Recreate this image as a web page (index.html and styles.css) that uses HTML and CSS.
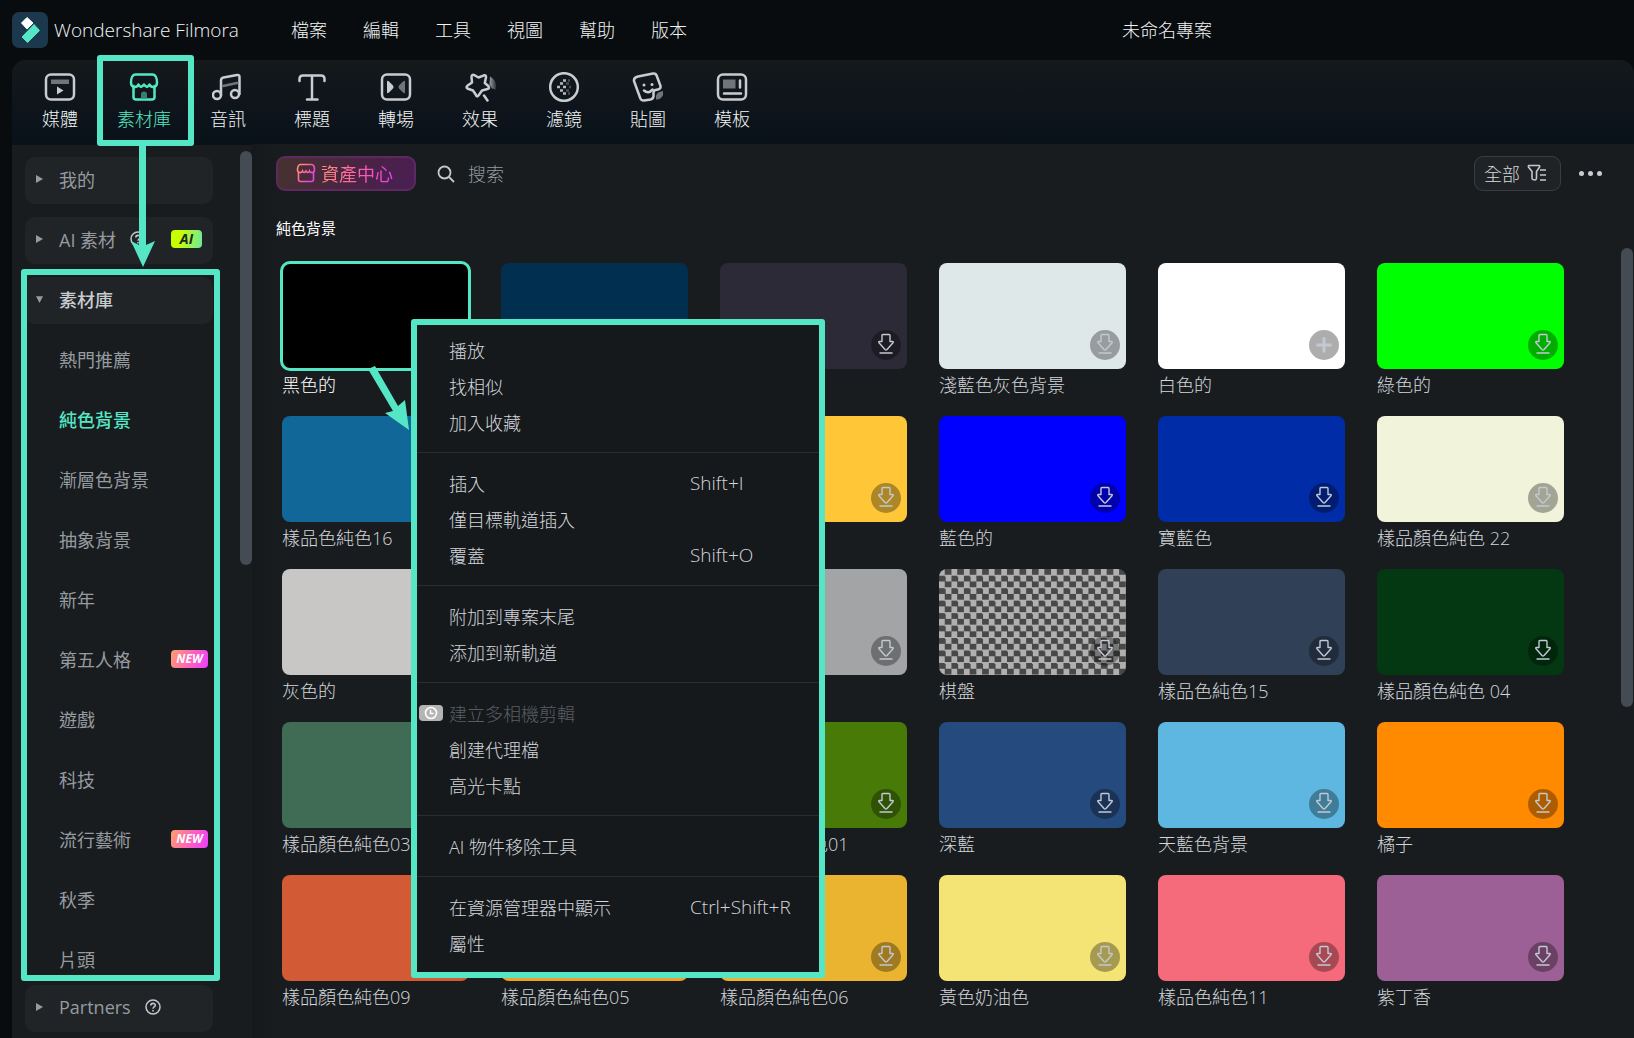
FILE: index.html
```html
<!DOCTYPE html>
<html lang="zh-Hant">
<head>
  <meta charset="UTF-8" />
  <meta name="viewport" content="width=device-width,initial-scale=1.0">
  <title>Wondershare Filmora</title>
  <link rel="stylesheet" href="styles.css">
</head>
<body>
  <!-- shared icons -->
  <svg class="defs" aria-hidden="true">
    <defs>
      <linearGradient id="pink" x1="0" y1="0" x2="1" y2="0.6">
        <stop offset="0" stop-color="#ff9f6b"/>
        <stop offset="0.5" stop-color="#ff62a5"/>
        <stop offset="1" stop-color="#e93ff0"/>
      </linearGradient>
      <linearGradient id="fade" x1="0" y1="0" x2="1" y2="0">
        <stop offset="0" stop-color="#9a9ea6"/>
        <stop offset="1" stop-color="#2a2f36"/>
      </linearGradient>
    </defs>
    <symbol id="i-down" viewBox="0 0 30 30">
      <path d="M11 5.5q0-1 1-1h6q1 0 1 1v6h2.5q1.300 0 .5 1.200L16 19.500q-1 1-2 0L8 12.700q-.8-1.200.5-1.200H11z" fill="none" stroke="#c3c9d2" stroke-width="1.400" stroke-linejoin="round"/>
      <path d="M8.500 23h13" stroke="#c3c9d2" stroke-width="1.400"/>
    </symbol>
    <symbol id="i-plus" viewBox="0 0 30 30">
      <path d="M15 7.500v15M7.500 15h15" stroke="#c3c9d2" stroke-width="3"/>
    </symbol>
    <symbol id="i-help" viewBox="0 0 16 16">
      <circle cx="8" cy="8" r="7" fill="none" stroke="currentColor" stroke-width="1.500"/>
      <path d="M5.800 6.600c0-3 4.500-2.900 4.500-.3C10.300 8 8 7.900 8 9.700M8 11v1.500" fill="none" stroke="currentColor" stroke-width="1.600"/>
    </symbol>
  </svg>

  <header class="titlebar">
    <svg class="logo" viewBox="0 0 36 36">
      <rect width="36" height="36" rx="7" fill="#1c384d"/>
      <path d="M15 5.500l6 5.500-6 6-5.500-6z" fill="#fff" stroke="#fff" stroke-linejoin="round"/>
      <path d="M22 12.500l5.500 6L15.500 30.500 10 25z" fill="#55e7c5" stroke="#55e7c5" stroke-linejoin="round"/>
    </svg>
    <span class="brand">Wondershare Filmora</span>
    <nav class="menubar">
      <button>檔案</button>
      <button>編輯</button>
      <button>工具</button>
      <button>視圖</button>
      <button>幫助</button>
      <button>版本</button>
    </nav>
    <span class="project">未命名專案</span>
  </header>

  <div class="app">
    <nav class="tabs">
      <button class="tab">
        <svg viewBox="0 0 32 30"><rect x="2" y="2.500" width="28" height="25" rx="5"/><path class="dim" d="M7 7.500h18v4.500H7z"/><path class="fill" d="M13 14.500l6.500 4-6.500 4z"/></svg>
        媒體
      </button>
      <button class="tab active">
        <svg viewBox="0 0 32 30"><path d="M7.500 2.500h17c3 0 4.500 4 4.500 8 0 5-5.500 6-7.500 2-1.500 4-4 2-5.500 0-1.500 2-4 4-5.500 0-2 4-7.500 3-7.500-2 0-4 1.500-8 4.500-8z"/><path d="M5.500 14v11q0 2.500 2.500 2.500h16q2.500 0 2.500-2.500V14"/><path class="dim" d="M13 26.500v-4q0-3 3-3t3 3v4z"/></svg>
        素材庫
      </button>
      <button class="tab">
        <svg viewBox="0 0 32 30"><circle cx="5" cy="23" r="4"/><circle cx="23" cy="22" r="4"/><path d="M9 23V8.500q0-2.500 2.500-3L25 3q2.500-.5 2.500 2v17"/><path class="soft" d="M11 14l14-3"/></svg>
        音訊
      </button>
      <button class="tab">
        <svg viewBox="0 0 32 30"><path d="M3.500 9V7q0-3.500 3.500-3.500h18q3.500 0 3.500 3.500v2M16 3.500V27M11 27.500h10.500"/></svg>
        標題
      </button>
      <button class="tab">
        <svg viewBox="0 0 32 30"><rect x="2" y="2.500" width="28" height="25" rx="5"/><path class="fill" d="M7 10v10q0 2 2 .6l4-4q1.200-1.600 0-3.200l-4-4q-2-1.400-2 .6z"/><path class="dim" d="M25 10v10q0 2-2 .6l-4-4q-1.200-1.600 0-3.200l4-4q2-1.400 2 .6z"/></svg>
        轉場
      </button>
      <button class="tab">
        <svg viewBox="0 0 32 30"><path d="M14.500 5.500L20 3.300Q22.300 3 22 5.300L20.800 11l3.500 3q1.700 2.300-.8 3L18 18.500l-3.500 5q-1.700 2-2.500-.5l-3-4.500-5-1.700q-2.500-1.300-.7-3L8 10.500 7.500 5Q7.800 2 10.300 3.200z"/><path d="M20 23.500l3.500 5"/><path fill="url(#fade)" stroke="none" d="M26 4.500c5 3 7 7 6 13l-4-1-2.500-4z"/></svg>
        效果
      </button>
      <button class="tab">
        <svg viewBox="0 0 32 30"><circle cx="16" cy="15" r="13.800"/><path class="dots" d="M9 15h3M12 11.500h3M12 18.500h3M15 8.500h3M15 15h3M15 21.500h3"/><path class="dots dark" d="M18 11.500h3M18 18.500h3M20 8.500h2M21 15h2M20 21.500h2"/></svg>
        濾鏡
      </button>
      <button class="tab">
        <svg viewBox="0 0 32 30"><path class="dim" d="M31 19v4c-1 3-4 5-7 4.500v-4l2-3z"/><path d="M6 4.500l15-3q3-.4 3.800 2.500L28.500 14q.5 3-2.500 3.500l-2.500.5q-2 .5-2 2.500v4q-.5 2.500-3 3l-6.500 1q-3 .2-3.800-2.500L2 9Q1.500 5.500 6 4.500z"/><circle class="fill" cx="12" cy="13" r="1.500"/><circle class="fill" cx="20" cy="12.500" r="1.500"/><path d="M12 18.500q4.500 4 8.500-1"/></svg>
        貼圖
      </button>
      <button class="tab">
        <svg viewBox="0 0 32 30"><rect x="2" y="2.500" width="28" height="25" rx="5"/><path class="dim" d="M7 7.500h12.500v9H7z"/><path d="M24 8.500v7M8 21.500h17"/></svg>
        模板
      </button>
    </nav>

    <div class="workspace">
      <aside class="sidebar">
        <div class="side-col">
          <div class="side-scroll">
            <button class="group"><i class="caret"></i>我的</button>
            <button class="group"><i class="caret"></i>AI 素材<svg class="help"><use href="#i-help"/></svg><span class="badge badge-ai">AI</span></button>
            <button class="group open"><i class="caret"></i>素材庫</button>
            <ul class="subs">
              <li><a href="#">熱門推薦</a></li>
              <li><a href="#" class="current">純色背景</a></li>
              <li><a href="#">漸層色背景</a></li>
              <li><a href="#">抽象背景</a></li>
              <li><a href="#">新年</a></li>
              <li><a href="#">第五人格<span class="badge badge-new">NEW</span></a></li>
              <li><a href="#">遊戲</a></li>
              <li><a href="#">科技</a></li>
              <li><a href="#">流行藝術<span class="badge badge-new">NEW</span></a></li>
              <li><a href="#">秋季</a></li>
              <li><a href="#">片頭</a></li>
            </ul>
          </div>
          <button class="group partners"><i class="caret"></i>Partners<svg class="help"><use href="#i-help"/></svg></button>
        </div>
        <div class="track side-track"><div class="thumb"></div></div>
      </aside>

      <main class="content">
        <div class="toolbar">
          <button class="center-btn">
            <svg viewBox="0 0 20 20"><path d="M4.500 1.500h11c2 0 3 3 3 5.500 0 3-4 3.500-5 1-1 2.500-2.500 1.500-3.500 0-1 1.500-2.500 2.500-3.500 0-1 2.500-5 2-5-1 0-2.500 1-5.500 3-5.500zM2.500 9v7.500q0 2 2 2h11q2 0 2-2V9" fill="none" stroke="url(#pink)" stroke-width="1.600"/></svg>
            <span>資產中心</span>
          </button>
          <label class="search">
            <svg viewBox="0 0 18 18"><circle cx="7.500" cy="7.500" r="6" fill="none" stroke="#c4c8cd" stroke-width="1.800"/><path d="M12 12l5 5" stroke="#c4c8cd" stroke-width="1.800"/></svg>
            <input type="text" placeholder="搜索" aria-label="搜索">
          </label>
          <button class="filter">全部
            <svg viewBox="0 0 20 18"><path d="M2 1.500h10q1 .2.600 1.500L9.500 7.500V14q-.2 2-1.300 2L6 15.500q-1-.3-1-1.500V7.500L1.500 3Q1 1.700 2 1.500zM13 6h6M13 11h6M13 16h6" fill="none" stroke="#c4c8cd" stroke-width="1.600"/></svg>
          </button>
          <button class="more" aria-label="更多"><i></i><i></i><i></i></button>
        </div>

        <h2 class="heading">純色背景</h2>

        <div class="grid">
          <figure class="card selected"><div class="swatch black"></div><figcaption>黑色的</figcaption></figure>
          <figure class="card"><div class="swatch navy"></div></figure>
          <figure class="card"><div class="swatch plum"><svg class="get"><use href="#i-down"/></svg></div></figure>
          <figure class="card"><div class="swatch mist"><svg class="get"><use href="#i-down"/></svg></div><figcaption>淺藍色灰色背景</figcaption></figure>
          <figure class="card"><div class="swatch white"><svg class="get"><use href="#i-plus"/></svg></div><figcaption>白色的</figcaption></figure>
          <figure class="card"><div class="swatch green"><svg class="get"><use href="#i-down"/></svg></div><figcaption>綠色的</figcaption></figure>

          <figure class="card"><div class="swatch teal"></div><figcaption>樣品色純色16</figcaption></figure>
          <figure class="card"><div class="swatch"></div></figure>
          <figure class="card"><div class="swatch amber"><svg class="get"><use href="#i-down"/></svg></div></figure>
          <figure class="card"><div class="swatch blue"><svg class="get"><use href="#i-down"/></svg></div><figcaption>藍色的</figcaption></figure>
          <figure class="card"><div class="swatch royal"><svg class="get"><use href="#i-down"/></svg></div><figcaption>寶藍色</figcaption></figure>
          <figure class="card"><div class="swatch ivory"><svg class="get"><use href="#i-down"/></svg></div><figcaption>樣品顏色純色 22</figcaption></figure>

          <figure class="card"><div class="swatch silver"></div><figcaption>灰色的</figcaption></figure>
          <figure class="card"><div class="swatch"></div></figure>
          <figure class="card"><div class="swatch gray"><svg class="get"><use href="#i-down"/></svg></div></figure>
          <figure class="card"><div class="swatch checker"><svg class="get"><use href="#i-down"/></svg></div><figcaption>棋盤</figcaption></figure>
          <figure class="card"><div class="swatch slate"><svg class="get"><use href="#i-down"/></svg></div><figcaption>樣品色純色15</figcaption></figure>
          <figure class="card"><div class="swatch forest"><svg class="get"><use href="#i-down"/></svg></div><figcaption>樣品顏色純色 04</figcaption></figure>

          <figure class="card"><div class="swatch sage"></div><figcaption>樣品顏色純色03</figcaption></figure>
          <figure class="card"><div class="swatch"></div></figure>
          <figure class="card"><div class="swatch olive"><svg class="get"><use href="#i-down"/></svg></div><figcaption>樣品顏色純色01</figcaption></figure>
          <figure class="card"><div class="swatch deep"><svg class="get"><use href="#i-down"/></svg></div><figcaption>深藍</figcaption></figure>
          <figure class="card"><div class="swatch sky"><svg class="get"><use href="#i-down"/></svg></div><figcaption>天藍色背景</figcaption></figure>
          <figure class="card"><div class="swatch orange"><svg class="get"><use href="#i-down"/></svg></div><figcaption>橘子</figcaption></figure>

          <figure class="card"><div class="swatch rust"></div><figcaption>樣品顏色純色09</figcaption></figure>
          <figure class="card"><div class="swatch honey"></div><figcaption>樣品顏色純色05</figcaption></figure>
          <figure class="card"><div class="swatch gold"><svg class="get"><use href="#i-down"/></svg></div><figcaption>樣品顏色純色06</figcaption></figure>
          <figure class="card"><div class="swatch cream"><svg class="get"><use href="#i-down"/></svg></div><figcaption>黃色奶油色</figcaption></figure>
          <figure class="card"><div class="swatch coral"><svg class="get"><use href="#i-down"/></svg></div><figcaption>樣品色純色11</figcaption></figure>
          <figure class="card"><div class="swatch lilac"><svg class="get"><use href="#i-down"/></svg></div><figcaption>紫丁香</figcaption></figure>
        </div>
      </main>
      <div class="track main-track"><div class="thumb"></div></div>
    </div>
  </div>

  <div class="context-menu">
    <button>播放</button>
    <button>找相似</button>
    <button>加入收藏</button>
    <hr>
    <button>插入<kbd>Shift+I</kbd></button>
    <button>僅目標軌道插入</button>
    <button>覆蓋<kbd>Shift+O</kbd></button>
    <hr>
    <button>附加到專案末尾</button>
    <button>添加到新軌道</button>
    <hr>
    <button class="with-icon" disabled>
      <svg class="clock" viewBox="0 0 24 16"><rect width="24" height="16" rx="4" fill="#b4b4b4"/><circle cx="12" cy="8" r="5.500" fill="none" stroke="#fff" stroke-width="1.600"/><path d="M11.500 5v3.500h3" fill="none" stroke="#fff" stroke-width="1.400"/></svg>建立多相機剪輯
    </button>
    <button>創建代理檔</button>
    <button>高光卡點</button>
    <hr>
    <button>AI 物件移除工具</button>
    <hr>
    <button>在資源管理器中顯示<kbd>Ctrl+Shift+R</kbd></button>
    <button>屬性</button>
  </div>

  <!-- guide frames and arrows on top of the app -->
  <div class="frame frame-tab"></div>
  <div class="frame frame-side"></div>
  <svg class="arrow arrow-side" viewBox="0 0 26 124"><path d="M9 0h7v101l9-4-12 26L1 97l8 4z"/></svg>
  <svg class="arrow arrow-menu" viewBox="0 0 44 66"><path d="M2 3l7-3 23 40 7-6 4 30-24-17 8-2z"/></svg>
</body>
</html>
```
FILE: styles.css
```css
* {
  box-sizing: border-box;
}

html, body {
  margin: 0;
  height: 100%;
  overflow: hidden;
}

body {
  position: relative;
  display: flex;
  flex-direction: column;
  background: #080c0f;
  color: #f2f4f5;
  font-family: "Open Sans", "Noto Sans CJK TC", sans-serif;
  font-size: 18px;
  font-weight: 300;
}

button, input {
  padding: 0;
  border: 0;
  background: none;
  color: inherit;
  font: inherit;
}

a {
  color: inherit;
  text-decoration: none;
}

.defs {
  position: absolute;
  width: 0;
  height: 0;
}

/* title bar */
.titlebar {
  flex: none;
  display: flex;
  align-items: center;
  height: 60px;
  padding-left: 12px;
}

.logo {
  width: 36px;
  height: 36px;
}

.brand {
  width: 237px;
  margin-left: 6px;
  font-size: 19px;
}

.menubar {
  display: flex;
  gap: 36px;
  padding-bottom: 2px;
}

.project {
  margin-left: 435px;
  padding-bottom: 2px;
}

/* tabs */
.app {
  flex: 1;
  min-height: 0;
  display: flex;
  flex-direction: column;
  margin-left: 12px;
}

.tabs {
  flex: none;
  display: flex;
  height: 84px;
  padding-left: 6px;
  border-radius: 14px 14px 0 0;
  background: linear-gradient(#15191b, #0d141b 60%, #0a1219);
}

.tab {
  width: 84px;
  display: flex;
  flex-direction: column;
  align-items: center;
  padding-top: 12px;
  line-height: 35px;
}

.tab svg {
  width: 32px;
  height: 30px;
  flex: none;
  fill: none;
  stroke: #c8ccd3;
  stroke-width: 2.5;
  stroke-linecap: round;
  stroke-linejoin: round;
}

.tab .fill {
  fill: #c8ccd3;
  stroke: none;
}

.tab .dim {
  fill: #70757d;
  stroke: none;
}

.tab .soft {
  stroke: #70757d;
}

.tab .dots {
  stroke-linecap: butt;
  stroke: #b4b8bf;
}

.tab .dark {
  stroke: #4a4f56;
}

.tab.active {
  color: #55e7c5;
}

.tab.active svg {
  stroke: #55e7c5;
}

.tab.active .dim {
  fill: #36806f;
}

/* sidebar */
.workspace {
  flex: 1;
  min-height: 0;
  display: flex;
  background: #191c1f;
}

.sidebar {
  flex: none;
  width: 240px;
  display: flex;
  justify-content: space-between;
  border-top: 1px solid #0d1114;
}

.side-col {
  width: 201px;
  display: flex;
  flex-direction: column;
  padding: 12px 0 6px 13px;
  color: #969ba0;
  font-weight: 400;
}

.side-scroll {
  flex: 1;
  min-height: 0;
  overflow: hidden;
}

.group {
  position: relative;
  display: flex;
  align-items: center;
  width: 100%;
  height: 47px;
  margin-bottom: 13px;
  padding: 0 0 3px 11px;
  border-radius: 10px;
  background: #212427;
}

.group.open {
  color: #c8ccd0;
  font-weight: 500;
}

.group.partners {
  flex: none;
  margin: 0;
}

.caret {
  width: 7px;
  height: 8px;
  margin-right: 16px;
  background: #969ba0;
  clip-path: polygon(0 0, 100% 50%, 0 100%);
}

.open .caret {
  clip-path: polygon(0 15%, 100% 15%, 50% 100%);
}

.help {
  width: 16px;
  height: 16px;
  margin-left: 14px;
  color: #c4c8cd;
}

.subs {
  margin: -7px 0 0;
  padding: 0;
  list-style: none;
}

.subs a {
  position: relative;
  display: flex;
  align-items: center;
  height: 60px;
  padding: 0 0 3px 34px;
}

.subs .current {
  color: #55e7c5;
  font-weight: 500;
}

.badge {
  position: absolute;
  left: 146px;
  height: 18px;
  border-radius: 4px;
  font: italic 700 12px/18px "Open Sans", sans-serif;
  text-align: center;
}

.badge-ai {
  width: 31px;
  background: linear-gradient(100deg, #c8ff00 30%, #6be8a0);
  color: #1c2a20;
  font-size: 14px;
}

.badge-new {
  width: 37px;
  background: linear-gradient(110deg, #ff9f6b, #ff5fc0 55%, #e93fff);
  color: #fff;
}

.track {
  flex: none;
  width: 12px;
}

.thumb {
  border-radius: 6px;
  background: #454b52;
}

.side-track {
  padding-top: 6px;
}

.side-track .thumb {
  height: 414px;
}

.main-track {
  padding-top: 104px;
  margin-right: 1px;
}

.main-track .thumb {
  height: 459px;
}

/* content */
.content {
  flex: 1;
  min-width: 0;
  padding: 12px 57px 0 24px;
  background: linear-gradient(90deg, #15191b, #191c1f 28px);
}

.toolbar {
  display: flex;
  align-items: center;
  height: 35px;
  margin-right: -38px;
}

.center-btn {
  display: flex;
  align-items: center;
  gap: 5px;
  width: 140px;
  height: 35px;
  padding: 0 0 2px 18px;
  border: 2px solid #5c2a5e;
  border-radius: 9px;
  background: linear-gradient(110deg, #46322f, #4a2344 60%, #4a1f54);
}

.center-btn svg {
  width: 20px;
  height: 20px;
}

.center-btn span {
  background: linear-gradient(90deg, #ff8a7c, #ff62a5 50%, #e93ff0);
  background-clip: text;
  color: transparent;
  font-weight: 400;
}

.search {
  flex: 1;
  display: flex;
  align-items: center;
  gap: 13px;
  margin-left: 21px;
}

.search svg {
  width: 18px;
  height: 18px;
}

.search input {
  width: 300px;
  outline: 0;
}

.search input::placeholder {
  color: #969ba0;
}

.filter {
  display: flex;
  align-items: center;
  gap: 7px;
  height: 35px;
  padding: 0 13px 2px 9px;
  border: 1px solid #3a3e44;
  border-radius: 9px;
  background: #202326;
  color: #d8dbde;
}

.filter svg {
  width: 20px;
  height: 18px;
}

.more {
  display: flex;
  gap: 4px;
  margin-left: 18px;
}

.more i {
  width: 5px;
  height: 5px;
  border-radius: 50%;
  background: #c8ccd3;
}

.heading {
  margin: 23px 0 20px;
  color: #fff;
  font-size: 15px;
  font-weight: 400;
  line-height: 29px;
}

.grid {
  display: grid;
  grid-template-columns: repeat(6, 1fr);
  gap: 15px 32px;
  margin-left: 6px;
}

.card {
  margin: 0;
}

.swatch {
  position: relative;
  aspect-ratio: 187 / 106;
  border-radius: 8px;
}

.card figcaption {
  height: 32px;
  color: #d2d6da;
  line-height: 32px;
  white-space: nowrap;
}

.selected .swatch {
  outline: 3px solid #55e7c5;
  outline-offset: -1px;
}

.selected figcaption {
  color: #fff;
}

.get {
  position: absolute;
  right: 6px;
  bottom: 9px;
  width: 30px;
  height: 30px;
  border-radius: 50%;
  background: rgba(0, 0, 0, 0.32);
}

.black { background: #000; }
.navy { background: #002f50; }
.plum { background: #2c2a37; }
.mist { background: #dfe8e9; }
.white { background: #fff; }
.green { background: #00ff00; }
.teal { background: #116898; }
.amber { background: #ffc637; }
.blue { background: #0000ff; }
.royal { background: #002ca8; }
.ivory { background: #f1f4da; }
.silver { background: #c9c7c5; }
.gray { background: #a3a4a6; }
.slate { background: #304057; }
.forest { background: #043813; }
.sage { background: #406b55; }
.olive { background: #477a06; }
.deep { background: #254a7e; }
.sky { background: #5eb7e1; }
.orange { background: #ff8a00; }
.rust { background: #d25b35; }
.honey { background: #f0a02a; }
.gold { background: #eab430; }
.cream { background: #f4e375; }
.coral { background: #f66b7b; }
.lilac { background: #9c5f96; }

.checker {
  background: conic-gradient(#484848 25%, #b0b0b0 0 50%, #484848 0 75%, #b0b0b0 0);
  background-size: calc(100% / 15) calc(200% / 17);
}

/* context menu */
.context-menu {
  position: absolute;
  left: 411px;
  top: 319px;
  width: 414px;
  padding: 7px 0 11px;
  border: 6px solid #55e7c5;
  border-radius: 3px;
  background: #16191c;
  color: #d2d6da;
}

.context-menu button {
  display: grid;
  grid-template-columns: 241px 1fr;
  align-items: center;
  width: 100%;
  height: 36px;
  padding-left: 32px;
  text-align: left;
}

.context-menu .with-icon {
  display: flex;
  gap: 6px;
  padding-left: 2px;
  color: #585d62;
}

.context-menu kbd {
  font: inherit;
  font-size: 19px;
}

.context-menu hr {
  height: 1px;
  margin: 12px 0;
  border: 0;
  background: #2a2d30;
}

.clock {
  width: 24px;
  height: 16px;
}

/* guides */
.frame {
  position: absolute;
  border: 6px solid #55e7c5;
  border-radius: 3px;
  pointer-events: none;
}

.frame-tab {
  left: 97px;
  top: 55px;
  width: 97px;
  height: 91px;
}

.frame-side {
  left: 21px;
  top: 269px;
  width: 199px;
  height: 712px;
}

.arrow {
  position: absolute;
  fill: #55e7c5;
  pointer-events: none;
}

.arrow-side {
  left: 130px;
  top: 144px;
  width: 26px;
  height: 124px;
}

.arrow-menu {
  left: 366px;
  top: 366px;
  width: 44px;
  height: 66px;
}
```
